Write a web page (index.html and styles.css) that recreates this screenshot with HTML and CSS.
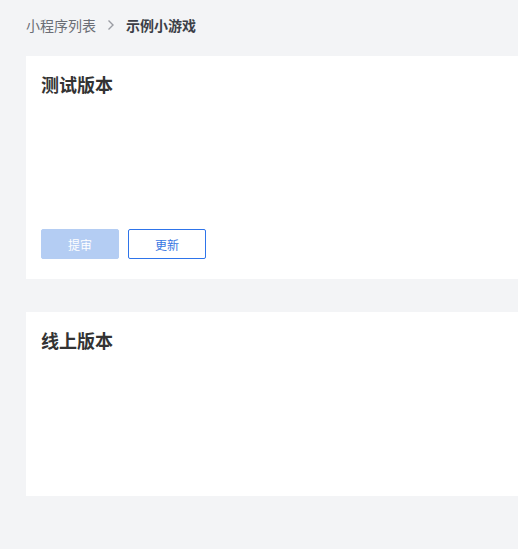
FILE: index.html
```html
<!DOCTYPE html>
<html lang="zh-CN">
<head>
<meta charset="utf-8">
<title>示例小游戏</title>
<link rel="stylesheet" href="styles.css">
</head>
<body>
<div class="page">
  <nav class="breadcrumb">
    <span class="crumb">小程序列表</span>
    <svg class="sep" width="8" height="12" viewBox="0 0 8 12"><path d="M1.5 1.5 L6 6 L1.5 10.5" fill="none" stroke="#9a9ca3" stroke-width="1.4"/></svg>
    <span class="crumb current">示例小游戏</span>
  </nav>
  <section class="card card-test">
    <h2 class="card-title">测试版本</h2>
    <div class="actions">
      <button class="btn btn-primary" disabled>提审</button>
      <button class="btn btn-outline">更新</button>
    </div>
  </section>
  <section class="card card-online">
    <h2 class="card-title">线上版本</h2>
  </section>
</div>
</body>
</html>
```
FILE: styles.css
```css
html, body {
  margin: 0;
  padding: 0;
}
body {
  background: #f3f4f6;
  font-family: "Noto Sans CJK SC", "Noto Sans", sans-serif;
  color: #333;
}
.page {
  padding: 0 0 0 26px;
}
.breadcrumb {
  display: flex;
  align-items: center;
  height: 24px;
  padding-top: 13px;
  margin-bottom: 19px;
  font-size: 14px;
}
.crumb {
  color: #6b6e75;
  line-height: 24px;
}
.crumb.current {
  color: #3c3f47;
  font-weight: 700;
}
.sep {
  margin: 0 11px 0 11px;
}
.card {
  background: #fff;
  box-sizing: border-box;
  padding: 14px 15px 20px;
  display: flex;
  flex-direction: column;
}
.card-test {
  height: 223px;
  margin-bottom: 33px;
}
.card-online {
  height: 184px;
}
.card-title {
  margin: 0;
  font-size: 18px;
  line-height: 28px;
  font-weight: 700;
  color: #333;
}
.actions {
  margin-top: auto;
  display: flex;
  gap: 9px;
}
.btn {
  width: 78px;
  height: 30px;
  box-sizing: border-box;
  font-family: inherit;
  font-size: 12px;
  border-radius: 2px;
  padding: 0;
  cursor: pointer;
}
.btn-primary {
  background: #b4cdf3;
  border: 1px solid #b4cdf3;
  color: #fff;
}
.btn-outline {
  background: #fff;
  border: 1px solid #2e74ea;
  color: #3a77e2;
}
```
